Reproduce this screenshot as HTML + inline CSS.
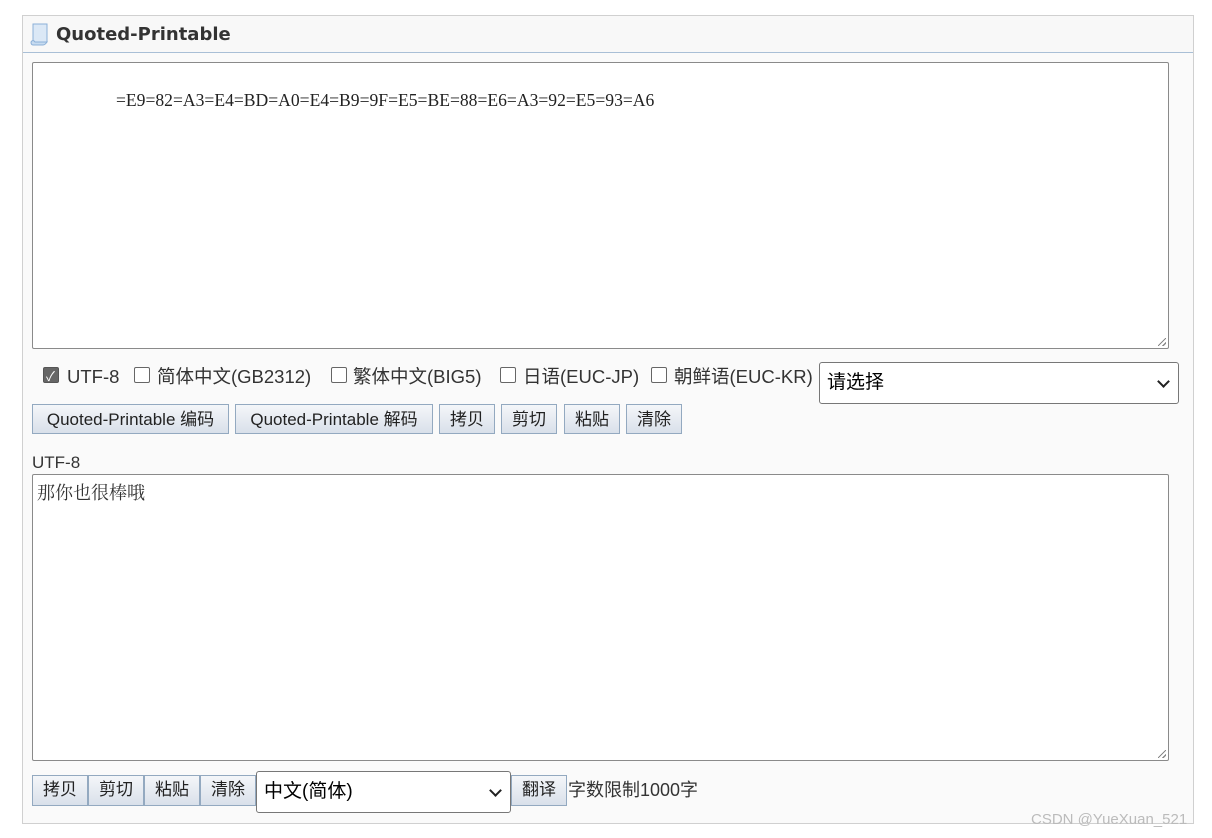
<!DOCTYPE html>
<html><head><meta charset="utf-8"><style>
body{margin:0;width:1212px;height:838px;background:#fff;position:relative;overflow:hidden;font-family:"Liberation Sans","Noto Sans CJK SC",sans-serif;}
.a{position:absolute;}
.panel{left:22px;top:15px;width:1170px;height:807px;border:1px solid #d0d0d0;background:#fafafa;}
.hdr{left:23px;top:16px;width:1170px;height:36px;border-bottom:1px solid #a9bfd6;background:#f8f8f8;}
.ta{background:#fff;border:1px solid #8a8a8a;border-radius:2px;}
.btn{height:28px;border:1px solid #93a9c0;background:linear-gradient(#f4f6f9,#d9e0ea);font-size:17px;color:#222;line-height:27px;text-align:center;box-sizing:border-box;}
.sel{background:#fff;border:1px solid #777;border-radius:3px;font-size:19px;line-height:40px;padding-left:7px;box-sizing:border-box;color:#000;}
.chev{position:absolute;right:10px;top:14px;width:7px;height:7px;border-right:2px solid #222;border-bottom:2px solid #222;transform:rotate(45deg);}
.cb{position:absolute;top:367px;width:16px;height:16px;border:1px solid #666;border-radius:2px;background:#fff;box-sizing:border-box;}
.lb{position:absolute;top:366px;height:22px;line-height:22px;font-size:18.5px;color:#333;white-space:nowrap;}
.grip{position:absolute;right:2px;bottom:2px;width:8px;height:8px;background:linear-gradient(135deg,transparent 45%,#888 45%,#888 55%,transparent 55%,transparent 75%,#888 75%,#888 85%,transparent 85%);}
</style></head><body>
<div class="a panel"></div>
<div class="a hdr"></div>
<svg class="a" style="left:29px;top:22px" width="22" height="24" viewBox="0 0 22 24"><path d="M4 2h14v18H4z" fill="#dbe8f6" stroke="#8bb0d8"/><path d="M2 20q2-3 4 0h12q-2 3-4 3H4q-2 0-2-3z" fill="#c7dbf0" stroke="#8bb0d8"/></svg>
<div class="a" style="left:56px;top:24px;font-weight:bold;color:#333;font-family:'DejaVu Sans',sans-serif;font-size:18px">Quoted-Printable</div>
<div class="a ta" style="left:32px;top:62px;width:1135px;height:285px"><div class="grip"></div></div>
<div class="a" style="left:116px;top:90px;font-family:'Liberation Serif',serif;font-size:17.6px;color:#222">=E9=82=A3=E4=BD=A0=E4=B9=9F=E5=BE=88=E6=A3=92=E5=93=A6</div>
<span class="cb" style="left:43px;background:#666;border-color:#555"><span style="position:absolute;left:2px;top:-2px;color:#fff;font-size:13px">✓</span></span><span class="lb" style="left:67px">UTF-8</span>
<span class="cb" style="left:134px"></span><span class="lb" style="left:157px">简体中文(GB2312)</span>
<span class="cb" style="left:331px"></span><span class="lb" style="left:353px">繁体中文(BIG5)</span>
<span class="cb" style="left:500px"></span><span class="lb" style="left:523px">日语(EUC-JP)</span>
<span class="cb" style="left:651px"></span><span class="lb" style="left:674px">朝鲜语(EUC-KR)</span>
<div class="a sel" style="left:819px;top:362px;width:360px;height:42px">请选择<span class="chev"></span></div>
<div class="a btn" style="left:32px;top:404px;width:197px;height:30px;line-height:29px">Quoted-Printable 编码</div>
<div class="a btn" style="left:235px;top:404px;width:198px;height:30px;line-height:29px">Quoted-Printable 解码</div>
<div class="a btn" style="left:439px;top:404px;width:56px;height:30px;line-height:29px">拷贝</div>
<div class="a btn" style="left:501px;top:404px;width:56px;height:30px;line-height:29px">剪切</div>
<div class="a btn" style="left:564px;top:404px;width:56px;height:30px;line-height:29px">粘贴</div>
<div class="a btn" style="left:626px;top:404px;width:56px;height:30px;line-height:29px">清除</div>
<div class="a" style="left:32px;top:453px;font-size:17px;color:#333">UTF-8</div>
<div class="a ta" style="left:32px;top:474px;width:1135px;height:285px"><div class="grip"></div></div>
<div class="a" style="left:37px;top:479px;font-size:18px;color:#333;font-family:'Noto Serif CJK SC',serif">那你也很棒哦</div>
<div class="a btn" style="left:32px;top:775px;width:56px;height:31px">拷贝</div>
<div class="a btn" style="left:88px;top:775px;width:56px;height:31px">剪切</div>
<div class="a btn" style="left:144px;top:775px;width:56px;height:31px">粘贴</div>
<div class="a btn" style="left:200px;top:775px;width:56px;height:31px">清除</div>
<div class="a sel" style="left:256px;top:771px;width:255px;height:42px">中文(简体)<span class="chev"></span></div>
<div class="a btn" style="left:511px;top:775px;width:56px;height:31px">翻译</div>
<div class="a" style="left:568px;top:776px;font-size:18px;color:#333">字数限制1000字</div>
<div class="a" style="left:1031px;top:811px;font-size:15px;color:#bbb">CSDN @YueXuan_521</div>
</body></html>
